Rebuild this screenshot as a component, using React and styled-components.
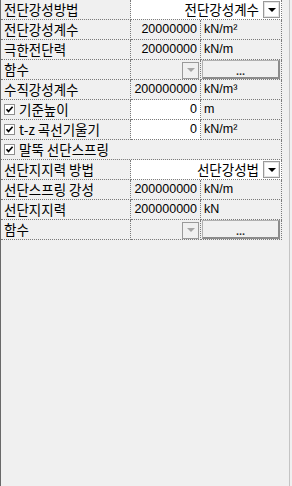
import styled, { createGlobalStyle, css } from 'styled-components';

const GlobalStyle = createGlobalStyle`
  html, body {
    margin: 0;
    padding: 0;
    background: #f0f0f0;
  }
`;

const Panel = styled.div`
  box-sizing: border-box;
  width: 290px;
  height: 486px;
  background: #f0f0f0;
  border-left: 1px solid #696969;
  border-right: 1px solid #c4c4c4;
  font-family: "Noto Sans CJK KR", "Liberation Sans", sans-serif;
  font-size: 13.5px;
  color: #000;
`;

const Grid = styled.div`
  display: grid;
  grid-template-columns: 130px 70px 81px;
  width: 281px;
`;

const Cell = styled.div`
  box-sizing: border-box;
  height: 20px;
  display: flex;
  align-items: center;
  border-bottom: 1px dotted #7a7a7a;
  border-right: 1px dotted #7a7a7a;
  background: ${p => (p.$white ? '#fff' : '#f0f0f0')};
  white-space: nowrap;
  ${p => p.$span && css`grid-column: span ${p.$span};`}
`;

const Label = styled(Cell)`
  padding: 0 0 2px 3px;
  line-height: 18px;
`;

const Value = styled(Cell)`
  justify-content: flex-end;
  padding: 0 3px 1px 0;
  font-family: "Liberation Sans", sans-serif;
  font-size: 12.5px;
  line-height: 16px;
`;

const Unit = styled(Cell)`
  padding: 0 0 1px 3px;
  font-family: "Liberation Sans", sans-serif;
  font-size: 12.5px;
  line-height: 16px;
`;

const Combo = styled(Cell)`
  justify-content: flex-end;
  padding: 0 1px 1px 0;
  gap: 4px;
`;

const ComboText = styled.span`
  line-height: 18px;
`;

const DropButton = styled.span`
  box-sizing: border-box;
  width: 17px;
  height: 17px;
  margin-top: 1px;
  display: flex;
  align-items: center;
  justify-content: center;
  background: ${p => (p.$disabled ? '#f0f0f0' : '#fff')};
  border: 1px solid #9a9a9a;
  box-shadow: inset 0 0 0 1px ${p => (p.$disabled ? '#f0f0f0' : '#e4e4e4')};
`;

const Arrow = styled.span`
  width: 0;
  height: 0;
  border-left: 4px solid transparent;
  border-right: 4px solid transparent;
  border-top: 4px solid ${p => (p.$disabled ? '#a6a6a6' : '#000')};
`;

const ArrowCell = styled(Cell)`
  justify-content: flex-end;
  padding: 0 1px 0 0;
`;

const EllipsisCell = styled(Cell)`
  padding: 0 1px 0 1px;
`;

const EllipsisButton = styled.span`
  box-sizing: border-box;
  width: 100%;
  height: 19px;
  display: flex;
  align-items: flex-end;
  justify-content: center;
  padding-bottom: 2px;
  background: #f0f0f0;
  border: 1px solid #b0b0b0;
  border-right: 2px solid #8c8c8c;
  border-bottom: 2px solid #8c8c8c;
  font-family: "Liberation Sans", sans-serif;
  font-size: 11px;
  font-weight: bold;
  line-height: 8px;
  color: #333;
`;

const Check = styled.span`
  box-sizing: border-box;
  width: 11px;
  height: 11px;
  margin: 2px 4px 0 0;
  flex-shrink: 0;
  border: 1px solid #8e8e8e;
  background: #fff;
  display: flex;
  align-items: center;
  justify-content: center;
`;

const CheckBox = () => (
  <Check>
    <svg width="9" height="9" viewBox="0 0 9 9">
      <path d="M1.5 4.2 L3.5 6.5 L7.6 1.8" fill="none" stroke="#000" strokeWidth="1.7" />
    </svg>
  </Check>
);

const rows = [
  { label: '전단강성방법', combo: '전단강성계수' },
  { label: '전단강성계수', value: '20000000', unit: 'kN/m²' },
  { label: '극한전단력', value: '20000000', unit: 'kN/m' },
  { label: '함수', func: true },
  { label: '수직강성계수', value: '200000000', unit: 'kN/m³' },
  { label: '기준높이', check: true, value: '0', unit: 'm', white: true },
  { label: 't-z 곡선기울기', check: true, value: '0', unit: 'kN/m²', white: true },
  { label: '말뚝 선단스프링', check: true, full: true },
  { label: '선단지지력 방법', combo: '선단강성법' },
  { label: '선단스프링 강성', value: '200000000', unit: 'kN/m' },
  { label: '선단지지력', value: '200000000', unit: 'kN' },
  { label: '함수', func: true },
];

const Row = ({ row }) => {
  const label = (
    <Label $span={row.full ? 3 : undefined}>
      {row.check && <CheckBox />}
      {row.label}
    </Label>
  );
  if (row.full) return label;
  if (row.combo) {
    return (
      <>
        {label}
        <Combo $span={2} $white>
          <ComboText>{row.combo}</ComboText>
          <DropButton>
            <Arrow />
          </DropButton>
        </Combo>
      </>
    );
  }
  if (row.func) {
    return (
      <>
        {label}
        <ArrowCell>
          <DropButton $disabled>
            <Arrow $disabled />
          </DropButton>
        </ArrowCell>
        <EllipsisCell>
          <EllipsisButton>...</EllipsisButton>
        </EllipsisCell>
      </>
    );
  }
  return (
    <>
      {label}
      <Value $white={row.white}>{row.value}</Value>
      <Unit>{row.unit}</Unit>
    </>
  );
};

export default function App() {
  return (
    <>
      <GlobalStyle />
      <Panel>
        <Grid>
          {rows.map((row, i) => (
            <Row key={i} row={row} />
          ))}
        </Grid>
      </Panel>
    </>
  );
}
